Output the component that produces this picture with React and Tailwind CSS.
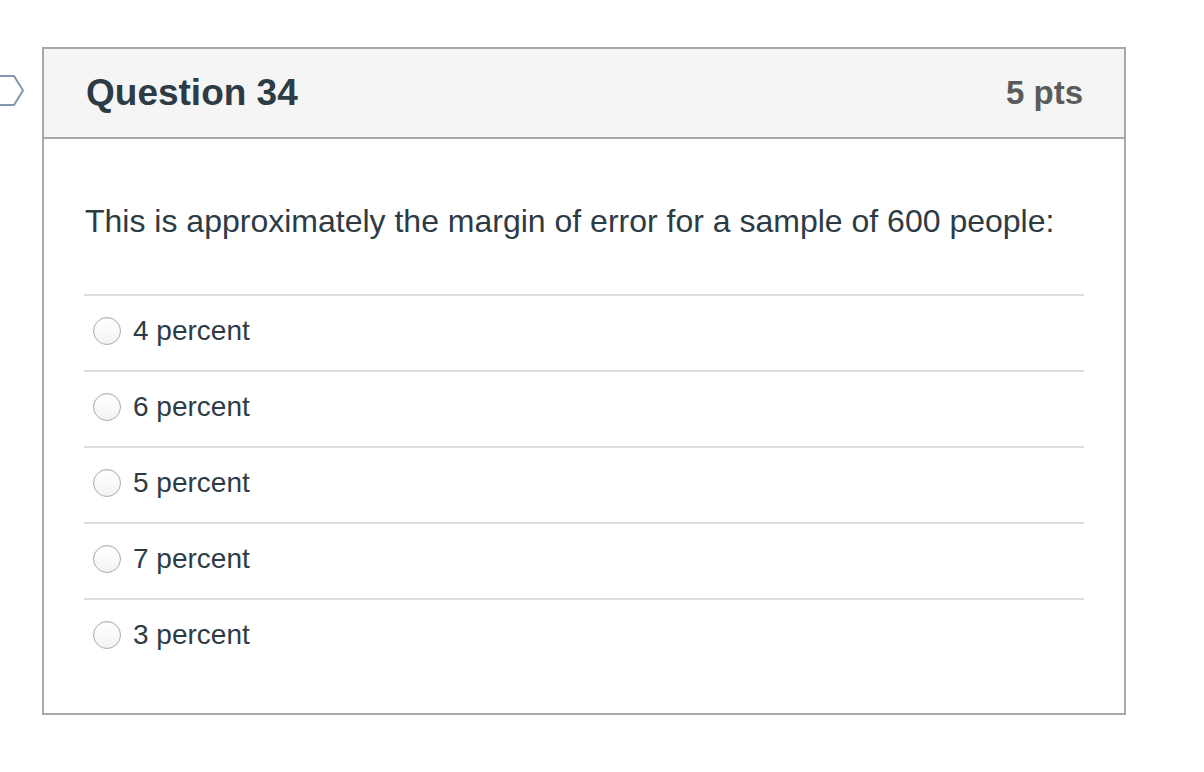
const ANSWERS = ['4 percent', '6 percent', '5 percent', '7 percent', '3 percent']

function Radio() {
  return (
    <span className="w-[28px] h-[28px] shrink-0 rounded-full border border-[#ababab] bg-gradient-to-b from-white to-[#f3f3f3] shadow-[inset_0_1px_1px_rgba(0,0,0,0.06)]" />
  )
}

export default function App() {
  return (
    <div className="min-h-screen bg-white pt-[47px] font-['Liberation_Sans',Arial,sans-serif]">
      <div className="flex items-start">
        {/* link tag pointer */}
        <svg width="42" height="88" viewBox="0 0 42 88" className="shrink-0">
          <path d="M-2 29 H14 L23 43.5 L14 58 H-2" fill="white" stroke="#8297ad" strokeWidth="2" strokeLinejoin="round" />
        </svg>

        <div className="w-[1084px] border-2 border-[#a8a8a8] bg-white">
          {/* Header */}
          <div className="h-[90px] bg-[#f5f5f5] border-b-2 border-[#a8a8a8] flex items-center justify-between pl-[42px] pr-[41px]">
            <h2 className="text-[37px] leading-[40px] font-bold text-[#2d3b45]">Question 34</h2>
            <span className="text-[33px] leading-[40px] font-bold text-[#5b5b5b]">5 pts</span>
          </div>

          {/* Body */}
          <div className="px-10 pt-[62px] pb-[39px]">
            <p className="text-[32px] leading-[40px] text-[#2d3b45] pl-[1px]">
              This is approximately the margin of error for a sample of 600 people:
            </p>

            <div className="mt-[53px]">
              {ANSWERS.map((a) => (
                <div key={a} className="border-t-2 border-[#dcdcdc] pt-[19px] pb-[23px] flex items-center gap-[12px] pl-[9px]">
                  <Radio />
                  <span className="text-[28px] leading-[32px] text-[#2d3b45]">{a}</span>
                </div>
              ))}
            </div>
          </div>
        </div>
      </div>
    </div>
  )
}
